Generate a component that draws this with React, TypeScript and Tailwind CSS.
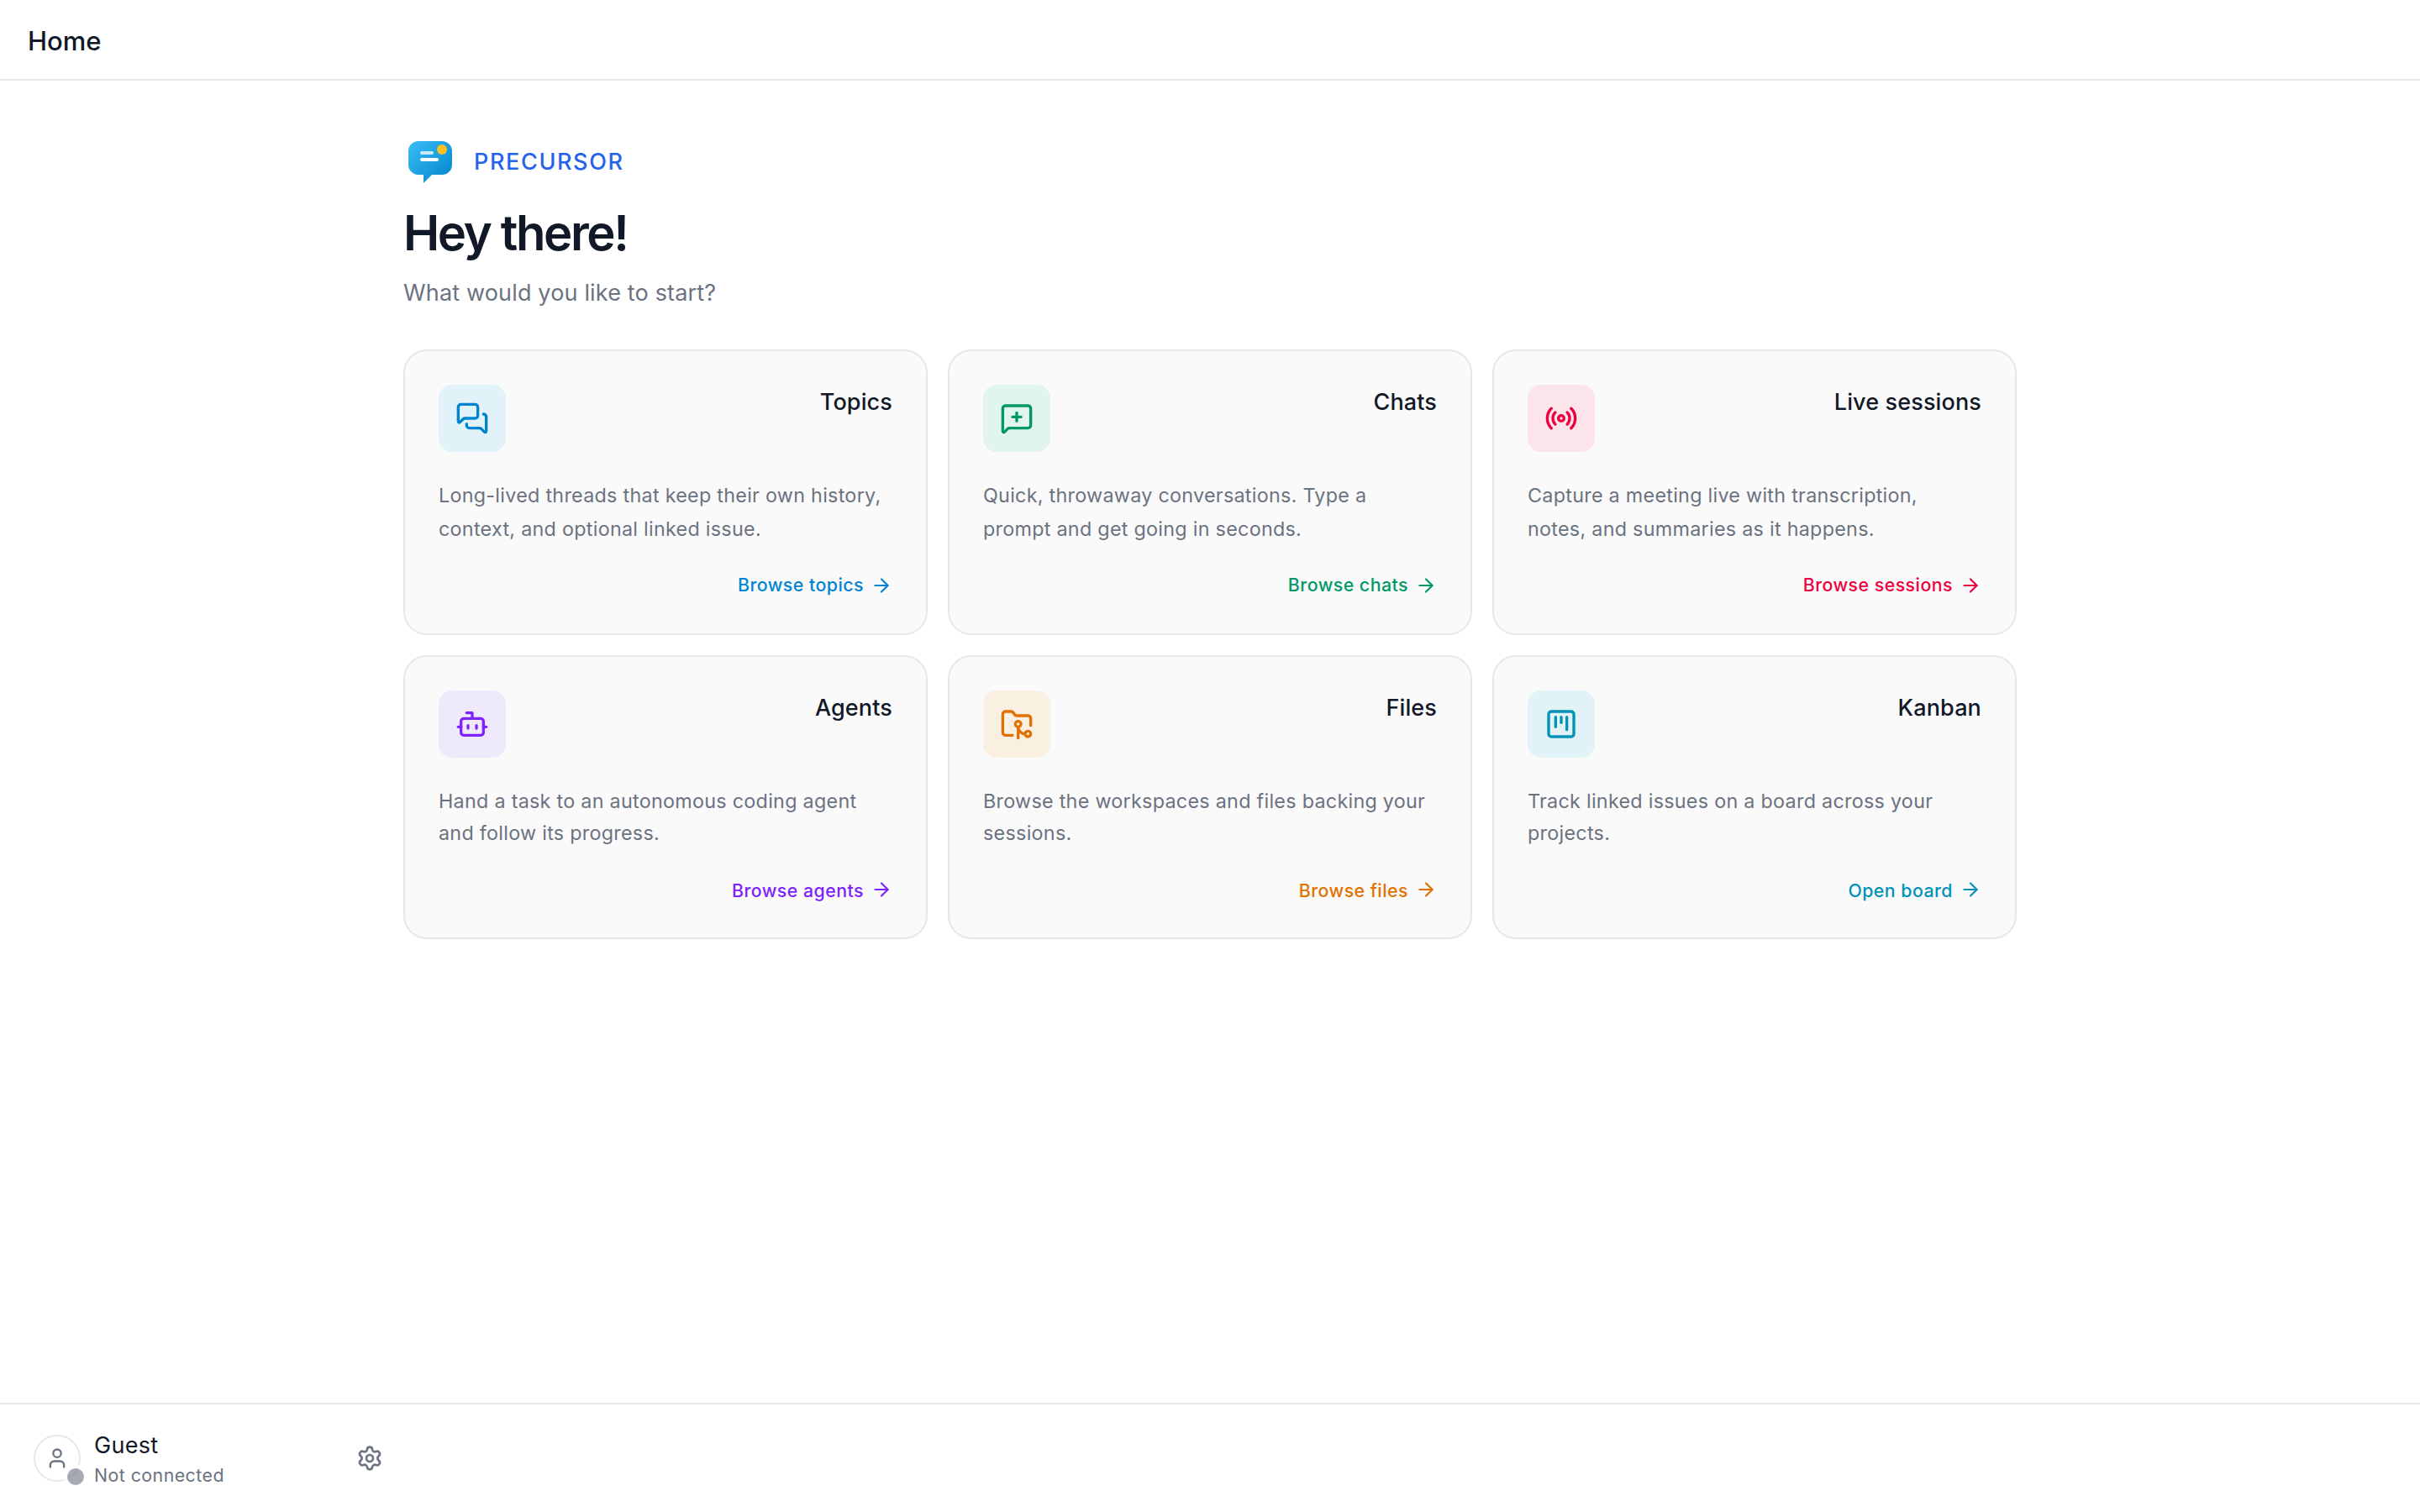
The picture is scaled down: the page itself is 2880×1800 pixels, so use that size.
import {
  ArrowRight,
  Bot,
  FolderGit2,
  LucideIcon,
  MessageSquarePlus,
  MessagesSquare,
  Radio,
  Settings,
  SquareKanban,
  User,
} from "lucide-react";

type CardType = {
  title: string;
  description: string;
  action: string;
  icon: LucideIcon;
  tile: string;
  link: string;
};

const topRow: CardType[] = [
  {
    title: "Topics",
    description:
      "Long-lived threads that keep their own history, context, and optional linked issue.",
    action: "Browse topics",
    icon: MessagesSquare,
    tile: "bg-sky-500/10 text-sky-600",
    link: "text-sky-600",
  },
  {
    title: "Chats",
    description:
      "Quick, throwaway conversations. Type a prompt and get going in seconds.",
    action: "Browse chats",
    icon: MessageSquarePlus,
    tile: "bg-emerald-500/10 text-emerald-600",
    link: "text-emerald-600",
  },
  {
    title: "Live sessions",
    description:
      "Capture a meeting live with transcription, notes, and summaries as it happens.",
    action: "Browse sessions",
    icon: Radio,
    tile: "bg-rose-500/10 text-rose-600",
    link: "text-rose-600",
  },
];

const bottomRow: CardType[] = [
  {
    title: "Agents",
    description:
      "Hand a task to an autonomous coding agent and follow its progress.",
    action: "Browse agents",
    icon: Bot,
    tile: "bg-[#efeafb] text-violet-600",
    link: "text-violet-600",
  },
  {
    title: "Files",
    description: "Browse the workspaces and files backing your sessions.",
    action: "Browse files",
    icon: FolderGit2,
    tile: "bg-amber-500/10 text-amber-600",
    link: "text-amber-600",
  },
  {
    title: "Kanban",
    description: "Track linked issues on a board across your projects.",
    action: "Open board",
    icon: SquareKanban,
    tile: "bg-cyan-500/10 text-cyan-600",
    link: "text-cyan-600",
  },
];

function Logo() {
  return (
    <svg viewBox="0 0 32 32" className="size-16 shrink-0">
      <defs>
        <linearGradient id="bubble" x1="0" y1="0" x2="1" y2="1">
          <stop offset="0" stopColor="#38bdf8" />
          <stop offset="1" stopColor="#0284c7" />
        </linearGradient>
      </defs>
      <path
        d="M9 4h14a6 6 0 0 1 6 6v8a6 6 0 0 1-6 6h-6l-5 5v-5H9a6 6 0 0 1-6-6v-8a6 6 0 0 1 6-6z"
        fill="url(#bubble)"
      />
      <rect x="10" y="10" width="8" height="2" rx="1" fill="#fff" opacity="0.75" />
      <rect x="10" y="14" width="11" height="2" rx="1" fill="#fff" />
      <circle cx="23" cy="9" r="3" fill="#fbbf24" />
    </svg>
  );
}

function Card(props: { card: CardType; tight?: boolean }) {
  const { card, tight } = props;
  const Icon = card.icon;
  return (
    <a
      className={`flex flex-col rounded-[28px] border-2 border-[#e5e7eb] bg-[#fafafa] p-10 ${
        tight ? "h-[338px]" : "h-[340px]"
      }`}
    >
      <div className="flex h-20 items-start justify-between">
        <div
          className={`flex size-20 items-center justify-center rounded-2xl ${card.tile}`}
        >
          <Icon size={40} />
        </div>
        <h2 className="text-[27px] leading-[41px] font-medium tracking-[0.005em]">
          {card.title}
        </h2>
      </div>
      <p
        className={`pr-2 text-[23.3px] tracking-[0.29px] text-[#6b7280] ${
          tight ? "mt-[33px] leading-[38px]" : "mt-8 leading-10"
        }`}
      >
        {card.description}
      </p>
      <div
        className={`mt-auto mb-px flex h-8 items-center justify-end gap-2 text-[21.3px] leading-8 font-medium tracking-[0.48px] ${card.link}`}
      >
        <span className={tight ? "pt-0.5" : "pb-0.5"}>{card.action}</span>
        <ArrowRight size={26} />
      </div>
    </a>
  );
}

function App() {
  return (
    <div className="flex h-screen flex-col bg-white font-[Inter,sans-serif] text-[#111827]">
      <header className="flex h-24 shrink-0 items-center border-b-2 border-[#e5e7eb] px-8 pt-1">
        <h1 className="ml-px text-[31px] font-medium">Home</h1>
      </header>
      <main className="flex-1">
        <div className="mx-auto w-[1920px] pt-16">
          <div className="flex items-center gap-5">
            <Logo />
            <span className="pt-0.5 text-[27px] font-medium tracking-[0.06em] text-[#2563eb]">
              PRECURSOR
            </span>
          </div>
          <h2 className="mt-4 text-[58px] leading-[75px] font-semibold tracking-[-0.041em]">
            Hey there!
          </h2>
          <p className="mt-[13px] text-[27px] leading-[42px] tracking-[0.006em] text-[#6b7280]">
            What would you like to start?
          </p>
          <div className="mt-[46px] grid grid-cols-3 gap-6">
            {topRow.map((card) => (
              <Card key={card.title} card={card} />
            ))}
            {bottomRow.map((card) => (
              <Card key={card.title} card={card} tight />
            ))}
          </div>
        </div>
      </main>
      <footer className="flex h-[130px] shrink-0 items-center border-t-2 border-[#e5e7eb] pl-10">
        <div className="relative flex size-14 items-center justify-center rounded-full border-2 border-[#e5e7eb] text-[#6b7280]">
          <User size={28} />
          <span className="absolute -right-1.5 -bottom-1.5 size-5 rounded-full bg-[#6b7280]/60 ring-4 ring-white" />
        </div>
        <div className="ml-4 flex w-[312px] flex-col pt-0.5">
          <span className="text-[27px] leading-[37px] tracking-[0.3px]">
            Guest
          </span>
          <span className="mt-px text-[21.3px] leading-8 tracking-[0.48px] text-[#6b7280]">
            Not connected
          </span>
        </div>
        <Settings size={32} className="text-[#6b7280]" />
      </footer>
    </div>
  );
}

export default App;
